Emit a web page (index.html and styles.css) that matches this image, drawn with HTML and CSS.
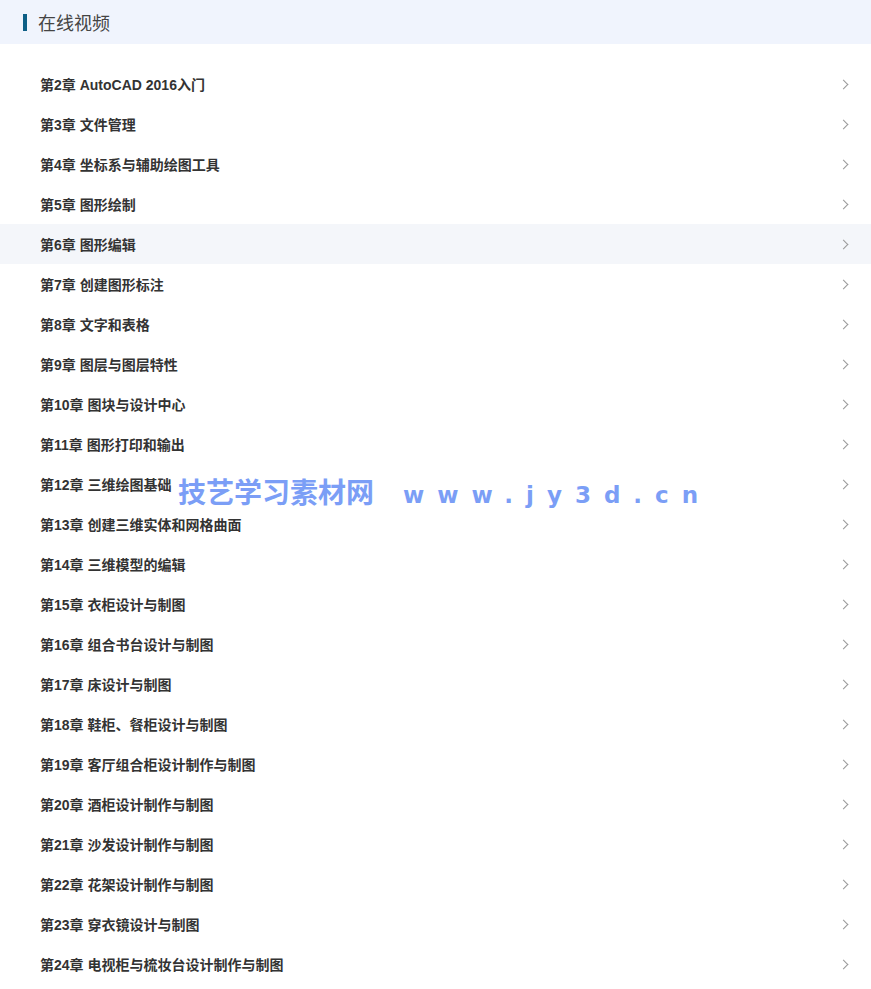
FILE: index.html
```html
<!DOCTYPE html>
<html lang="zh-CN">
<head>
<meta charset="UTF-8">
<title>在线视频</title>
<link rel="stylesheet" href="styles.css">
</head>
<body>
<div class="panel">
    <div class="panel-hd"><span class="bar"></span>在线视频</div>
    <ul class="chapters">
        <li><a href="javascript:;">第2章 AutoCAD 2016入门</a></li>
        <li><a href="javascript:;">第3章 文件管理</a></li>
        <li><a href="javascript:;">第4章 坐标系与辅助绘图工具</a></li>
        <li><a href="javascript:;">第5章 图形绘制</a></li>
        <li class="on"><a href="javascript:;">第6章 图形编辑</a></li>
        <li><a href="javascript:;">第7章 创建图形标注</a></li>
        <li><a href="javascript:;">第8章 文字和表格</a></li>
        <li><a href="javascript:;">第9章 图层与图层特性</a></li>
        <li><a href="javascript:;">第10章 图块与设计中心</a></li>
        <li><a href="javascript:;">第11章 图形打印和输出</a></li>
        <li><a href="javascript:;">第12章 三维绘图基础</a></li>
        <li><a href="javascript:;">第13章 创建三维实体和网格曲面</a></li>
        <li><a href="javascript:;">第14章 三维模型的编辑</a></li>
        <li><a href="javascript:;">第15章 衣柜设计与制图</a></li>
        <li><a href="javascript:;">第16章 组合书台设计与制图</a></li>
        <li><a href="javascript:;">第17章 床设计与制图</a></li>
        <li><a href="javascript:;">第18章 鞋柜、餐柜设计与制图</a></li>
        <li><a href="javascript:;">第19章 客厅组合柜设计制作与制图</a></li>
        <li><a href="javascript:;">第20章 酒柜设计制作与制图</a></li>
        <li><a href="javascript:;">第21章 沙发设计制作与制图</a></li>
        <li><a href="javascript:;">第22章 花架设计制作与制图</a></li>
        <li><a href="javascript:;">第23章 穿衣镜设计与制图</a></li>
        <li><a href="javascript:;">第24章 电视柜与梳妆台设计制作与制图</a></li>
    </ul>
    <div class="mark">技艺学习素材网<span class="url">www.jy3d.cn</span></div>
</div>
</body>
</html>
```

FILE: styles.css
```css
*{margin:0;padding:0;list-style:none;}
body{background:#fff;font-family:"Liberation Sans",Arial,"Noto Sans CJK SC",sans-serif;}
.panel{position:relative;width:871px;}
.panel-hd{height:44px;background:#f0f4fd;display:flex;align-items:center;padding-left:23px;font-size:18px;color:#444;}
.panel-hd .bar{width:4px;height:17px;background:#0d5f86;margin-right:11px;}
.chapters{padding-top:20px;}
.chapters li{height:40px;}
.chapters li.on{background:#f4f6fa;}
.chapters a{display:flex;align-items:center;justify-content:space-between;height:40px;padding:0 24px 0 40px;font-size:14px;font-weight:bold;color:#333;text-decoration:none;}
.chapters a:after{content:"";width:6px;height:6px;border-top:1px solid #999;border-right:1px solid #999;transform:rotate(45deg);margin-top:1px;}
.mark{position:absolute;left:178px;top:471px;font-size:28px;font-weight:bold;color:#7b9ef6;font-family:"Noto Sans CJK SC",sans-serif;white-space:nowrap;}
.mark .url{margin-left:29px;font-family:"DejaVu Sans",sans-serif;letter-spacing:13px;font-size:23px;}
```
